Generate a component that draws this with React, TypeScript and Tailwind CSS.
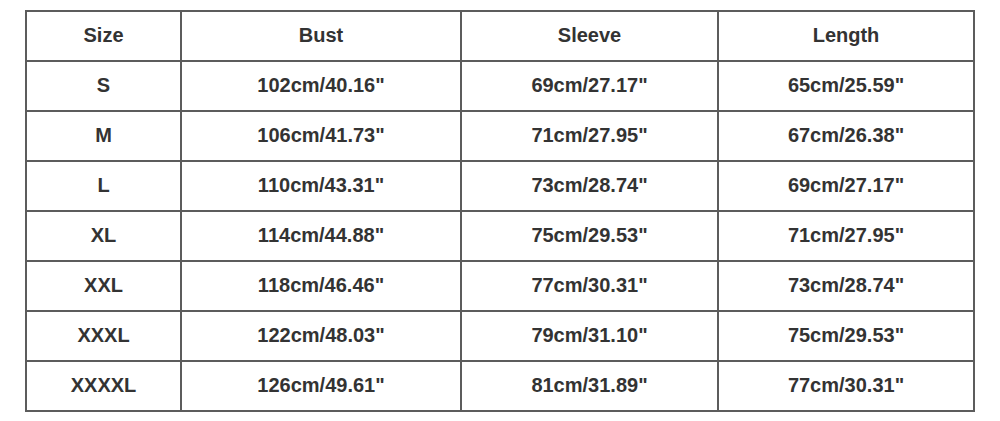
const headers = ["Size", "Bust", "Sleeve", "Length"];

const rows = [
  ["S", "102cm/40.16\"", "69cm/27.17\"", "65cm/25.59\""],
  ["M", "106cm/41.73\"", "71cm/27.95\"", "67cm/26.38\""],
  ["L", "110cm/43.31\"", "73cm/28.74\"", "69cm/27.17\""],
  ["XL", "114cm/44.88\"", "75cm/29.53\"", "71cm/27.95\""],
  ["XXL", "118cm/46.46\"", "77cm/30.31\"", "73cm/28.74\""],
  ["XXXL", "122cm/48.03\"", "79cm/31.10\"", "75cm/29.53\""],
  ["XXXXL", "126cm/49.61\"", "81cm/31.89\"", "77cm/30.31\""],
];

const cell = "border-2 border-[#5c5c5c] h-[50px] p-0 pb-[2px] text-center align-middle";

export default function App() {
  return (
    <div className="w-[1000px] h-[421px] bg-white pt-[10px] pl-[25px] font-['Liberation_Sans',Arial,sans-serif] text-[20px] leading-[24px] font-bold text-[#333333]">
      <table className="border-collapse table-fixed w-[948px]">
        <colgroup>
          <col className="w-[155px]" />
          <col className="w-[280px]" />
          <col className="w-[257px]" />
          <col className="w-[256px]" />
        </colgroup>
        <thead>
          <tr>
            {headers.map((h) => (
              <th key={h} className={cell + " font-bold"}>
                {h}
              </th>
            ))}
          </tr>
        </thead>
        <tbody>
          {rows.map((r) => (
            <tr key={r[0]}>
              {r.map((v, i) => (
                <td key={i} className={cell}>
                  {v}
                </td>
              ))}
            </tr>
          ))}
        </tbody>
      </table>
    </div>
  );
}
